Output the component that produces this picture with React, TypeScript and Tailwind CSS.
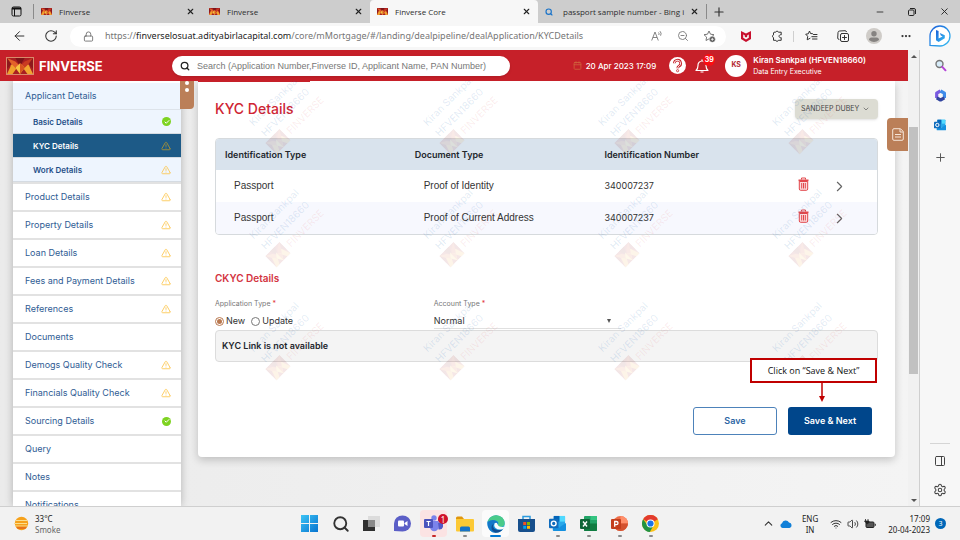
import React from "react";
import {
  ArrowLeft,
  Calendar,
  Check,
  ChevronDown,
  ChevronRight,
  ChevronUp,
  Ellipsis,
  Lock,
  Minus,
  PanelRight,
  Plus,
  RotateCw,
  Search,
  Settings,
  TriangleAlert,
  Volume2,
  Wifi,
  X,
  ZoomOut,
} from "lucide-react";

const UI = "font-['Open_Sans','Noto_Sans',sans-serif]";
const APP = "font-[Inter,Roboto,sans-serif]";

function BrandMark({ className }: { className: string }) {
  return (
    <svg viewBox="0 0 28 18" preserveAspectRatio="none" className={className} aria-hidden="true">
      <rect width="28" height="18" fill="#a81e22" />
      <path d="M0 0 9 4 14 9 5 12Z" fill="#e2622a" />
      <path d="M28 0 19 4 14 9 23 12Z" fill="#c93a22" />
      <path d="M0 18 5 7 10 12 6 18Z" fill="#f0a02c" />
      <path d="M28 18 23 7 18 12 22 18Z" fill="#f2a531" />
      <path d="M9 0h10l-5 9Z" fill="#7c1418" />
      <path d="m14 6 5 5-5 7-5-7Z" fill="#f6c443" />
      <path d="m14 6 5 5-5 7Z" fill="#d9541f" />
      <path d="M0 0 5 7 0 12ZM28 0l-5 7 5 5Z" fill="#8e181c" />
    </svg>
  );
}

function Tab({ title, active, search }: { title: string; active?: boolean; search?: boolean }) {
  return (
    <div
      className={`flex w-[168px] min-w-0 items-center border-l pl-[6px] pr-[7px] ${
        active ? "rounded-t border-[#f7f7f7] bg-[#f7f7f7]" : "border-[#cdcdcd]"
      }`}
    >
      {search ? (
        <Search size={8} color="#1b74c9" strokeWidth={3.5} className="mr-[3px] shrink-0" />
      ) : (
        <BrandMark className="h-[7px] w-[11px] shrink-0" />
      )}
      <span className="ml-[7px] min-w-0 flex-1 overflow-hidden whitespace-nowrap text-[8px] leading-3 text-[#2d2d2d]">
        {title}
      </span>
      <button aria-label={`Close ${title}`} className="ml-1">
        <X size={9} strokeWidth={3} color="#222" />
      </button>
    </div>
  );
}

function TabStrip() {
  return (
    <div className="flex h-[23px] shrink-0 bg-[#cdcdcd]">
      <button aria-label="Tab actions" className="flex w-[33px] items-center justify-center">
        <svg width="11" height="11" viewBox="0 0 11 11" fill="none" stroke="#111">
          <rect x="1" y="1" width="9" height="9" rx="1.5" />
          <path d="M1 2.5h9" strokeWidth="2" />
          <path d="M3.5 3v7" />
        </svg>
      </button>
      <span className="my-1 w-px bg-[#8a8a8a]" />
      <Tab title="Finverse" />
      <span className="my-1 -mr-px w-px bg-[#8a8a8a]" />
      <Tab title="Finverse" />
      <Tab title="Finverse Core" active />
      <Tab title="passport sample number - Bing i" search />
      <span className="my-1 -mr-px w-px bg-[#8a8a8a]" />
      <button aria-label="New tab" className="flex w-[26px] items-center justify-center">
        <Plus size={14} strokeWidth={2} color="#333" />
      </button>
      <div className="ml-auto flex">
        <button aria-label="Minimize" className="flex w-8 items-center justify-center">
          <Minus size={10} color="#222" />
        </button>
        <button aria-label="Restore" className="flex w-8 items-center justify-center">
          <svg width="8" height="8" viewBox="0 0 8 8" fill="none" stroke="#222">
            <rect x="0.5" y="2" width="5.5" height="5.5" rx="1" />
            <path d="M2 .5h4A1.5 1.5 0 0 1 7.500 2v4" />
          </svg>
        </button>
        <button aria-label="Close window" className="flex w-8 items-center justify-center">
          <X size={11} color="#222" />
        </button>
      </div>
    </div>
  );
}

function Toolbar() {
  return (
    <div className="flex h-[27px] shrink-0 items-center bg-[#f7f7f7] pb-px pl-3">
      <button aria-label="Back" className="flex w-[15px] justify-center">
        <ArrowLeft size={16} strokeWidth={1.600} color="#333" />
      </button>
      <button aria-label="Refresh" className="ml-4 flex w-[15px] justify-center">
        <RotateCw size={14} strokeWidth={1.800} color="#333" />
      </button>
      <div className="ml-3 flex h-[21px] min-w-0 flex-1 items-center rounded-full bg-white pl-[13px] pr-[10px]">
        <Lock size={11} strokeWidth={1.800} color="#666" />
        <div
          role="textbox"
          aria-label="Address"
          className="ml-[11px] min-w-0 flex-1 overflow-hidden whitespace-nowrap font-['Noto_Sans',sans-serif] text-[9px] leading-4 text-[#767676]"
        >
          https://<span className="text-[#1c1c1c]">finverselosuat.adityabirlacapital.com</span>
          /core/mMortgage/#/landing/dealpipeline/dealApplication/KYCDetails
        </div>
        <div className="flex items-center gap-[14px] text-[#777]">
          <button aria-label="Read aloud">
            <svg width="12" height="12" viewBox="0 0 12 12" fill="none" stroke="currentColor" strokeWidth=".9">
              <path d="M.7 10.500 4 2l3.300 8.500M1.900 7.500h4.200M7.500 2.500q1 1 .3 2.500M9 1.200q1.900 2 .6 4.500" />
            </svg>
          </button>
          <button aria-label="Zoom out">
            <ZoomOut size={12} strokeWidth={1.800} />
          </button>
          <button aria-label="Add to favourites">
            <svg width="13" height="13" viewBox="0 0 13 13" fill="none" stroke="currentColor">
              <path d="m6 1 1.500 3.200 3.500.5L8.500 7 6 8.900 3 10.500l.6-3.400L1 4.700l3.500-.5Z" strokeLinejoin="round" />
              <circle cx="9.300" cy="9.300" r="3" fill="#555" stroke="#fff" strokeWidth=".5" />
              <path d="M9.300 7.800v3M7.800 9.300h3" stroke="#fff" strokeWidth=".8" />
            </svg>
          </button>
        </div>
      </div>
      <div className="ml-[14px] flex items-center">
        <button aria-label="McAfee" className="flex w-[12px] justify-center">
          <svg width="10" height="11" viewBox="0 0 10 11">
            <path d="M0 0l5 2.500L10 0v8L5 11 0 8Z" fill="#c8102e" />
            <path d="M2.200 3.600 5 5l2.800-1.400v3.200L5 8.500 2.200 6.800Z" fill="#f7f7f7" />
            <path d="M3.800 3.200h2.400v2.500L5 6.400l-1.200-.7Z" fill="#c8102e" />
          </svg>
        </button>
        <button aria-label="Extensions" className="ml-[18px] flex w-[13px] justify-center">
          <svg width="12" height="12" viewBox="0 0 12 12" fill="none" stroke="#333" strokeLinejoin="round">
            <path d="M3 2.200h1.700a1.400 1.400 0 0 1 2.700 0h2.800v2.700a1.500 1.500 0 1 0 0 2.700v2.700H7.400a1.400 1.400 0 0 1-2.700 0H2.500V7.600a1.400 1.400 0 0 1 0-2.700V2.700Z" />
          </svg>
        </button>
        <span className="ml-[10px] h-[11px] w-px bg-[#cfcfcf]" />
        <button aria-label="Favourites" className="ml-[11px] flex w-[13px] justify-center">
          <svg width="13" height="12" viewBox="0 0 13 12" fill="none" stroke="#333" strokeLinejoin="round" strokeLinecap="round">
            <path d="M7.500 3.700 5.500 3.500 4.500 1 3.300 3.800.7 4.200 2.700 6.300 2.200 9.800 5 8.300M8.500 4.500H12M6.800 6.700H12M7.500 9H12" />
          </svg>
        </button>
        <button aria-label="Collections" className="ml-[18px] flex w-[13px] justify-center">
          <svg width="12" height="12" viewBox="0 0 12 12" fill="none" stroke="#333" strokeLinecap="round">
            <rect x="3.500" y="3.500" width="8" height="8" rx="1.500" />
            <path d="M2 9.500A1.500 1.500 0 0 1 .7 8L1 2.500A1.700 1.700 0 0 1 2.700 1L8 .7a1.500 1.500 0 0 1 1.500 1M7.500 5.500v4M5.500 7.500h4" />
          </svg>
        </button>
        <button aria-label="Profile" className="ml-[17px] flex">
          <svg width="16" height="16" viewBox="0 0 16 16">
            <circle cx="8" cy="8" r="8" fill="#cfccc8" />
            <circle cx="8" cy="5.800" r="2.700" fill="#868381" />
            <path d="M3 12q0-2.500 2.500-2.500h5Q13 9.500 13 12q-5 4-10 0Z" fill="#868381" />
          </svg>
        </button>
        <button aria-label="Settings and more" className="ml-[18px] mr-2 flex">
          <Ellipsis size={12} strokeWidth={2.500} color="#333" />
        </button>
      </div>
    </div>
  );
}

function OutlookIcon({ size }: { size: number }) {
  return (
    <svg width={size} height={size} viewBox="0 0 18 18">
      <rect x="5" y="1" width="12" height="12" rx="1" fill="#28a8ea" />
      <path d="M11 1h6v6h-6Z" fill="#50d9ff" />
      <path d="M5 1h6v6H5Z" fill="#0364b8" />
      <path d="M4 8.500 11 13l7-4.500V16a1 1 0 0 1-1 1H5a1 1 0 0 1-1-1Z" fill="#1490df" />
      <rect x="0" y="4" width="10" height="10" rx="1" fill="#0f6cbd" />
      <circle cx="5" cy="9" r="2.500" fill="none" stroke="#fff" strokeWidth="1.500" />
    </svg>
  );
}

function EdgeSidebar() {
  return (
    <aside className="flex w-10 shrink-0 flex-col items-center bg-[#f7f7f7] pb-[9px]">
      <button aria-label="Bing chat" className="mt-[2px]">
        <svg width="22" height="22" viewBox="0 0 22 22" className="block">
          <defs>
            <linearGradient id="bing" x1="0" y1="0" x2="1" y2="1">
              <stop offset="0" stopColor="#1b5fd9" />
              <stop offset="1" stopColor="#35bdf2" />
            </linearGradient>
          </defs>
          <path d="M1 20.500V11A10 10 0 1 1 11 21Z" fill="#fff" stroke="url(#bing)" strokeWidth="1.300" />
          <path d="m7 5 2.600 1v7.500l4-2-1.800-1-1-2.500 5 2.200v3L9.600 17 7 15.200Z" fill="url(#bing)" />
        </svg>
      </button>
      <button aria-label="Search" className="mt-3">
        <svg width="13" height="13" viewBox="0 0 13 13" fill="none" className="block">
          <circle cx="5.500" cy="5" r="3.500" fill="#d8edfa" stroke="#777" strokeWidth="1.400" />
          <path d="m8.300 7.800 3.200 3.500" stroke="#b445d8" strokeWidth="2" strokeLinecap="round" />
        </svg>
      </button>
      <button aria-label="Microsoft 365" className="mt-[17px]">
        <svg width="13" height="13" viewBox="0 0 13 13" fill="none" strokeWidth="3.200" strokeLinejoin="round" className="block">
          <path d="M2.700 9V4.200L6.500 2" stroke="#7a5be0" />
          <path d="m6.500 2 3.900 2.200V9" stroke="#3e8bea" />
          <path d="m10.400 8.800-3.900 2.200-3.800-2.200" stroke="#32459f" />
        </svg>
      </button>
      <button aria-label="Outlook" className="mt-[17px]">
        <OutlookIcon size={12} />
      </button>
      <button aria-label="Add" className="mt-[20px]">
        <Plus size={13} strokeWidth={1.800} color="#555" className="block" />
      </button>
      <span className="mt-auto h-px w-5 bg-[#d5d5d5]" />
      <button aria-label="Hide sidebar" className="mt-[11px]">
        <PanelRight size={12} strokeWidth={2} color="#444" />
      </button>
      <button aria-label="Settings" className="mt-4">
        <Settings size={14} strokeWidth={1.800} color="#444" />
      </button>
    </aside>
  );
}

function AppHeader() {
  return (
    <header className="flex h-[31px] shrink-0 items-center bg-[#c62029] pl-[6px] text-white">
      <BrandMark className="h-[18px] w-7 border border-[#d98a6a]" />
      <span className="ml-[5px] w-[133px] text-[13px] font-bold leading-4">FINVERSE</span>
      <label className="flex h-5 w-[338px] items-center rounded-full bg-white pl-2 shadow">
        <Search size={10} strokeWidth={3} color="#222" />
        <input
          type="search"
          aria-label="Search"
          placeholder="Search (Application Number,Finverse ID, Applicant Name, PAN Number)"
          className="ml-[7px] min-w-0 flex-1 bg-transparent font-['Liberation_Sans',Arial,sans-serif] text-[9px] leading-4 text-[#333] outline-none placeholder:text-[#777]"
        />
      </label>
      <div className="ml-auto flex items-center">
        <Calendar size={9} strokeWidth={2} color="#d0683f" />
        <span className="ml-1 whitespace-nowrap text-[8px] font-medium leading-3">20 Apr 2023 17:09</span>
      </div>
      <button aria-label="Help" className="ml-[13px] flex">
        <svg width="17" height="17" viewBox="0 0 17 17" fill="none">
          <circle cx="8.500" cy="8.500" r="8.500" fill="#fff" />
          <path d="M5.300 6.300a3.200 3.200 0 1 1 4.700 2.900q-1.300.6-1.300 2" stroke="#c62029" strokeWidth="2.600" />
          <path d="M5.300 6.300a3.200 3.200 0 1 1 4.700 2.900q-1.300.6-1.300 2" stroke="#fff" strokeWidth=".9" />
          <circle cx="8.600" cy="13.700" r="1.100" stroke="#c62029" strokeWidth=".8" />
        </svg>
      </button>
      <button aria-label="Notifications, 39 new" className="relative ml-[9px] flex">
        <svg width="14" height="16" viewBox="0 0 14 16" fill="none" stroke="#fff" strokeWidth="1.200">
          <path d="M1 12.500q2-1.500 2-5A4 4 0 0 1 7 3a4 4 0 0 1 4 4.500q0 3.500 2 5ZM5.500 14h3M7 3V1.500" strokeLinejoin="round" />
        </svg>
        <span className="absolute -right-[6px] -top-1 flex h-3 w-3 items-center justify-center rounded-full bg-[#fb0d12] text-[7px] font-bold leading-3">
          39
        </span>
      </button>
      <span className="ml-4 flex h-[22px] w-[22px] items-center justify-center rounded-full bg-white text-[7px] font-bold text-[#b32a31]">
        KS
      </span>
      <div className="ml-[6px] mr-[42px] whitespace-nowrap">
        <p className="text-[8px] font-semibold leading-3">Kiran Sankpal (HFVEN18660)</p>
        <p className="text-[7px] leading-3">Data Entry Executive</p>
      </div>
    </header>
  );
}

type Status = "done" | "warn" | "none";

const applicant: { label: string; status: Status; active?: boolean }[] = [
  { label: "Basic Details", status: "done" },
  { label: "KYC Details", status: "warn", active: true },
  { label: "Work Details", status: "warn" },
];

const sections: { label: string; status: Status }[] = [
  { label: "Product Details", status: "warn" },
  { label: "Property Details", status: "warn" },
  { label: "Loan Details", status: "warn" },
  { label: "Fees and Payment Details", status: "warn" },
  { label: "References", status: "warn" },
  { label: "Documents", status: "none" },
  { label: "Demogs Quality Check", status: "warn" },
  { label: "Financials Quality Check", status: "warn" },
  { label: "Sourcing Details", status: "done" },
  { label: "Query", status: "none" },
  { label: "Notes", status: "none" },
  { label: "Notifications", status: "none" },
];

function StatusIcon({ status, dim }: { status: Status; dim?: boolean }) {
  if (status === "done")
    return (
      <span className="flex h-[9px] w-[9px] items-center justify-center rounded-full bg-[#7ed321]">
        <Check size={6} strokeWidth={4} color="#fff" />
      </span>
    );
  if (status === "warn") return <TriangleAlert size={10} strokeWidth={2} color={dim ? "#b3962f" : "#fdc54b"} />;
  return null;
}

function SideNav() {
  return (
    <nav className="w-[168px] shrink-0 overflow-hidden bg-white text-[9px] leading-3 text-[#2f5c94] shadow-[0_0_8px_rgba(0,0,0,0.25)]">
      <a href="#applicant" className="mt-[2px] flex h-[27px] items-center border-b border-[#dde3ea] bg-[#eef5fe] px-3">
        Applicant Details
      </a>
      {applicant.map((i) => (
        <a
          key={i.label}
          href="#applicant"
          className={`flex h-6 items-center justify-between border-b border-[#d5dbe2] pl-5 pr-[10px] text-[8px] font-semibold ${
            i.active ? "bg-[#1d5a87] text-white" : "bg-[#eef5fe] text-[#1f4f88]"
          }`}
        >
          {i.label}
          <StatusIcon status={i.status} dim={i.active} />
        </a>
      ))}
      <div className="border-t-2 border-[#e2e2e2]">
        {sections.map((i) => (
          <a
            key={i.label}
            href="#section"
            className="flex h-7 items-center justify-between border-b-2 border-[#e2e2e2] pl-3 pr-[10px]"
          >
            {i.label}
            <StatusIcon status={i.status} />
          </a>
        ))}
      </div>
    </nav>
  );
}

function Watermarks() {
  return (
    <div className="pointer-events-none absolute inset-0 overflow-hidden" aria-hidden="true">
      <div className="-mt-[26px] grid auto-rows-[113px] grid-cols-4">
        {Array.from({ length: 12 }, (_, i) => (
          <div key={i} className="flex items-center justify-center">
            <div className="-rotate-45 whitespace-nowrap text-center text-[10px] leading-4 text-[#2f6fb5]/15">
              <p>Kiran Sankpal</p>
              <p>HFVEN18660</p>
              <p className="flex items-center justify-center gap-1 text-[#dd3c3c]/10">
                <BrandMark className="h-4 w-5 opacity-10" />
                FINVERSE
              </p>
            </div>
          </div>
        ))}
      </div>
    </div>
  );
}

function TrashIcon() {
  return (
    <svg width="11" height="14" viewBox="0 0 11 14" fill="none" stroke="#e2474b">
      <path d="M1.300 4.500h8.400v7.500a1.300 1.300 0 0 1-1.300 1.300H2.600A1.300 1.300 0 0 1 1.300 12Z" fill="#fbdcdc" />
      <path d="M.5 3.300h10" strokeWidth="1.800" />
      <path d="M3.500 2.500V1h4v1.500" />
      <path d="M3.700 6v5.500M5.500 6v5.500M7.300 6v5.500" />
    </svg>
  );
}

const rows = [
  { type: "Passport", doc: "Proof of Identity", num: "340007237" },
  { type: "Passport", doc: "Proof of Current Address", num: "340007237" },
];

function KycTable() {
  return (
    <div className="mt-[19px] overflow-hidden rounded border border-[#d6dadd]">
      <table className="w-full table-fixed text-left">
        <colgroup>
          <col className="w-[28.700%]" />
          <col className="w-[28.700%]" />
          <col />
          <col className="w-9" />
          <col className="w-14" />
        </colgroup>
        <thead>
          <tr className="h-[31px] bg-[#d9e3ed] text-[9px] leading-3 text-[#23272c]">
            <th className="pl-[9px] font-semibold">Identification Type</th>
            <th className="pl-[9px] font-semibold">Document Type</th>
            <th className="pl-[9px] font-semibold">Identification Number</th>
            <th aria-label="Delete" />
            <th aria-label="Open" />
          </tr>
        </thead>
        <tbody>
          {rows.map((r, i) => (
            <tr
              key={i}
              className="h-8 font-['Liberation_Sans',Arial,sans-serif] text-[10px] leading-3 text-[#333] even:bg-[#f7f8fe]"
            >
              <td className="pl-[18px]">{r.type}</td>
              <td className="pl-[18px]">{r.doc}</td>
              <td className="pl-[9px] font-[Inter,Roboto,sans-serif] text-[9px]">{r.num}</td>
              <td className="pb-1">
                <button aria-label="Delete row" className="mx-auto flex">
                  <TrashIcon />
                </button>
              </td>
              <td>
                <button aria-label="Open row" className="ml-[10px] flex">
                  <ChevronRight size={17} strokeWidth={1.600} color="#666" />
                </button>
              </td>
            </tr>
          ))}
        </tbody>
      </table>
    </div>
  );
}

const radio =
  "h-[9px] w-[9px] appearance-none rounded-full border border-[#777] bg-clip-content p-[1px] checked:border-[#b9784f] checked:bg-[#b9784f]";

function KycCard() {
  return (
    <main className="relative min-w-0 flex-1 self-start rounded-b bg-white px-[17px] pb-[22px] pt-[18px] shadow-[0_3px_9px_rgba(0,0,0,0.2)]">
      <span className="absolute left-0 top-0 h-px w-28 bg-[#c62029]" />
      <div className="flex h-5 items-center justify-between">
        <h1 className="text-[14px] font-medium leading-5 text-[#cf2533]">KYC Details</h1>
        <div className="relative">
          <select
            aria-label="Applicant"
            className="block h-5 w-[83px] appearance-none rounded-sm bg-[#dcdcd3] pl-[6px] text-[7px] leading-3 text-[#444] shadow-sm"
          >
            <option>SANDEEP DUBEY</option>
          </select>
          <ChevronDown size={8} color="#555" className="pointer-events-none absolute right-2 top-[6px]" />
        </div>
      </div>
      <KycTable />
      <h2 className="mt-[35px] text-[10px] font-semibold leading-4 text-[#d3343f]">CKYC Details</h2>
      <div className="mt-3 grid grid-cols-[33%_1fr] text-[9px] text-[#333]">
        <fieldset>
          <legend className="text-[7px] leading-3 text-[#777]">
            Application Type <span className="text-[#e23b3b]">*</span>
          </legend>
          <div className="mt-[3px] flex h-4 items-center">
            <input type="radio" id="new" name="apptype" defaultChecked className={radio} />
            <label htmlFor="new" className="ml-[2px] leading-4">
              New
            </label>
            <input type="radio" id="update" name="apptype" className={`${radio} ml-[6px]`} />
            <label htmlFor="update" className="ml-[2px] leading-4">
              Update
            </label>
          </div>
        </fieldset>
        <div className="relative w-[187px]">
          <label htmlFor="acct" className="block text-[7px] leading-3 text-[#777]">
            Account Type <span className="text-[#e23b3b]">*</span>
          </label>
          <select
            id="acct"
            className="mt-[3px] block h-4 w-full appearance-none border-b border-[#e0e0e0] bg-transparent leading-4"
          >
            <option>Normal</option>
          </select>
          <span className="pointer-events-none absolute right-[10px] top-[21px] border-x-2 border-t-4 border-x-transparent border-t-[#555]" />
        </div>
      </div>
      <div className="mt-px flex h-8 items-center rounded-sm border border-[#dcdcdc] bg-[#f4f4f4] pl-[6px] text-[9px] font-semibold leading-3 text-[#23272c]">
        KYC Link is not available
      </div>
      <Watermarks />
      <div className="relative mt-[45px] flex justify-end gap-[11px] pr-[6px] text-[9px] font-semibold leading-3">
        <div className="absolute right-px bottom-8 flex w-[127px] flex-col items-center font-['Open_Sans','Noto_Sans',sans-serif] font-normal">
          <p className="w-full border-2 border-[#c00000] bg-white py-[3px] text-center text-[9px] leading-[15px] text-[#111]">
            Click on “Save &amp; Next”
          </p>
          <svg width="8" height="20" viewBox="0 0 8 20" className="ml-4" aria-hidden="true">
            <path d="M4 0v14" stroke="#c00000" strokeWidth="1.500" />
            <path d="M1 13h6l-3 6Z" fill="#c00000" />
          </svg>
        </div>
        <button className="h-7 w-[84px] rounded-[3px] border border-[#4d82ba] bg-white text-[#2b65a3]">Save</button>
        <button className="h-7 w-[84px] rounded-[3px] bg-[#00468b] text-white">Save &amp; Next</button>
      </div>
    </main>
  );
}

function Tile({
  children,
  name,
  mark,
  box,
}: {
  children: React.ReactNode;
  name: string;
  mark?: "gray" | "red" | "blue";
  box?: "white" | "pink";
}) {
  return (
    <button
      aria-label={name}
      className={`relative flex h-[27px] w-[27px] items-center justify-center rounded ${
        box === "white" ? "bg-[#fbfbfb]" : box === "pink" ? "bg-[#fbe3e3]" : ""
      }`}
    >
      {children}
      {mark && (
        <span
          className={`absolute bottom-0 h-[2px] rounded-full ${
            mark === "blue" ? "w-[11px] bg-[#0078d4]" : mark === "red" ? "w-1 bg-[#c62828]" : "w-1 bg-[#8a8a8a]"
          }`}
        />
      )}
    </button>
  );
}

function Taskbar() {
  return (
    <footer className="relative flex h-[34px] shrink-0 items-center border-t border-[#cfcfcf] bg-[#f2f2f2] font-['Noto_Sans',sans-serif] text-[8px] leading-[11px] text-[#222]">
      <div className="flex items-center pl-[14px]">
        <svg width="15" height="15" viewBox="0 0 15 15">
          <circle cx="7.500" cy="7.500" r="6.700" fill="#f6a21c" />
          <path d="M2 4.500h11M0 7.500h13M1 10h13" stroke="#fbdf8f" strokeWidth="1" />
          <path d="M2 10.700h11l-2 2.300H4Z" fill="#e8731a" />
        </svg>
        <div className="ml-[6px]">
          <p>33°C</p>
          <p className="text-[#666]">Smoke</p>
        </div>
      </div>
      <div className="absolute left-1/2 flex -translate-x-1/2 gap-1">
        <Tile name="Start">
          <svg width="17" height="17" viewBox="0 0 17 17">
            <defs>
              <linearGradient id="win" x1="0" y1="0" x2="1" y2="1">
                <stop offset="0" stopColor="#3cc4f5" />
                <stop offset="1" stopColor="#0873cf" />
              </linearGradient>
            </defs>
            <path d="M0 0h8v8H0ZM9 0h8v8H9ZM0 9h8v8H0ZM9 9h8v8H9Z" fill="url(#win)" />
          </svg>
        </Tile>
        <Tile name="Search">
          <Search size={18} strokeWidth={2.500} color="#333" />
        </Tile>
        <Tile name="Task view">
          <svg width="17" height="17" viewBox="0 0 17 17">
            <rect x="5" y="1" width="12" height="11" fill="#dcdcdc" />
            <rect x="0" y="5" width="12" height="11" fill="#2f2f2f" />
            <path d="M5 5h7v7H5Z" fill="#8a8a8a" />
          </svg>
        </Tile>
        <Tile name="Chat">
          <svg width="17" height="17" viewBox="0 0 17 17">
            <path d="M0 16V8.500a8.500 8 0 1 1 8.500 8Z" fill="#5b5fc7" />
            <rect x="4" y="5.500" width="6" height="6" rx="1" fill="#fff" />
            <path d="m10.500 8 3-2v5l-3-2Z" fill="#fff" />
          </svg>
        </Tile>
        <Tile name="Teams" mark="red" box="pink">
          <svg width="19" height="17" viewBox="0 0 19 17">
            <circle cx="10" cy="3" r="2.700" fill="#7b83eb" />
            <circle cx="16" cy="5" r="2" fill="#5059c9" />
            <path d="M6 6h8.500v6a4.200 4.200 0 0 1-8.500 0Z" fill="#7b83eb" />
            <path d="M14 7.500h5V12q-1 3-4.500 2.500Z" fill="#5059c9" />
            <rect x="0" y="4" width="9" height="9" rx="1" fill="#4b53bc" />
            <path d="M2.500 6.500h4M4.500 6.500V11" stroke="#fff" strokeWidth="1.200" />
          </svg>
          <span className="absolute -right-px top-1 flex h-[10px] w-[10px] items-center justify-center rounded-full bg-[#d0112b] text-[8px] text-white">
            1
          </span>
        </Tile>
        <Tile name="File Explorer" mark="gray">
          <svg width="18" height="16" viewBox="0 0 18 16">
            <path d="M0 2q0-1.500 1.500-1.500H6L8 3H0Z" fill="#e0960d" />
            <path d="M0 3h17q1 0 1 1v10.500q0 1-1 1H1q-1 0-1-1Z" fill="#fcc935" />
            <path d="M4 15.500V12q0-1.500 1.500-1.500h7Q14 10.500 14 12v3.500Z" fill="#1673c7" />
          </svg>
        </Tile>
        <Tile name="Edge" mark="blue" box="white">
          <svg width="18" height="18" viewBox="0 0 18 18">
            <circle cx="9" cy="9" r="8.700" fill="#1b9de2" />
            <path d="M.5 7Q3 0 9.500.3 17 1 17.700 8q0 4-4.700 4-3 0-2-2 1.500-4-3-4.500Q3 5 .5 7Z" fill="#4acb8a" />
            <path d="M.5 7Q5 3.500 9.500 6q2.500 2 1 4.500-3-4-6 .5Q4 15 8 17.700 0 16.500.5 7Z" fill="#1477c8" />
            <path d="M7 8.500q-2.500 4 2 6 4 1.500 7-.8-2.500 4.300-8 4Q3.500 15 4.500 11q.8-2 2.500-2.500Z" fill="#104f95" />
            <path d="M7.500 8.500q2-1.500 3 .5.500 3 5 3 1.500 0 2-.8-.5 2-1.500 2.700-4.500 1.500-7.500-1-2-2-1-4.400Z" fill="#fbfbfb" />
          </svg>
        </Tile>
        <Tile name="Microsoft Store">
          <svg width="17" height="17" viewBox="0 0 17 17">
            <path d="M5 4V1.500h7V4" fill="none" stroke="#2b9be0" strokeWidth="1.500" />
            <path d="M0 4h17v11q0 2-2 2H2q-2 0-2-2Z" fill="#174f8c" />
            <path d="M5.200 7h3v3h-3Z" fill="#f25022" />
            <path d="M9 7h3v3H9Z" fill="#7fba00" />
            <path d="M5.200 10.800h3v3h-3Z" fill="#00a4ef" />
            <path d="M9 10.800h3v3H9Z" fill="#ffb900" />
          </svg>
        </Tile>
        <Tile name="Outlook" mark="gray">
          <OutlookIcon size={17} />
        </Tile>
        <Tile name="Excel" mark="gray">
          <svg width="17" height="17" viewBox="0 0 17 17">
            <rect x="4" y="1" width="13" height="15" rx="1" fill="#21a366" />
            <path d="M4 8.500h13V15q0 1-1 1H5q-1 0-1-1Z" fill="#107c41" />
            <path d="M10.500 1H16q1 0 1 1v3h-6.500Z" fill="#33c481" />
            <rect x="0" y="4" width="10" height="10" rx="1" fill="#0e6537" />
            <path d="m3 6.500 4 5M7 6.500l-4 5" stroke="#fff" strokeWidth="1.400" />
          </svg>
        </Tile>
        <Tile name="PowerPoint" mark="gray">
          <svg width="17" height="17" viewBox="0 0 17 17">
            <circle cx="9.500" cy="8.500" r="7.500" fill="#ed6c47" />
            <path d="M9.500 1A7.500 7.500 0 0 1 17 8.500H9.500Z" fill="#ff8f6b" />
            <path d="M2 8.500h15a7.500 7.500 0 0 1-15 0Z" fill="#d35230" />
            <rect x="0" y="4" width="10" height="10" rx="1" fill="#c43e1c" />
            <path d="M3.700 11.800V6.500h1.700a1.500 1.500 0 0 1 0 3.200H3.700" fill="none" stroke="#fff" strokeWidth="1.300" />
          </svg>
        </Tile>
        <Tile name="Chrome" mark="gray">
          <svg width="17" height="17" viewBox="0 0 17 17">
            <circle cx="8.500" cy="8.500" r="8.500" fill="#fbc116" />
            <path d="M8.500 8.500 1.100 4.300a8.500 8.500 0 0 1 14.800 0Z" fill="#e33b2e" />
            <path d="M1.100 4.300a8.500 8.500 0 0 0 6.700 12.700L11.500 10.500 8.500 8.500 5 9.500Z" fill="#229342" />
            <circle cx="8.500" cy="8.500" r="4" fill="#fff" />
            <circle cx="8.500" cy="8.500" r="3.100" fill="#1a73e8" />
          </svg>
        </Tile>
      </div>
      <div className="ml-auto flex items-center pr-[14px]">
        <ChevronUp size={13} strokeWidth={2} color="#333" />
        <svg width="12" height="8" viewBox="0 0 12 8" className="ml-[5px]">
          <path d="M2.500 8A2.500 2.500 0 0 1 2 3.200 3.800 3.800 0 0 1 9 2.500 2.800 2.800 0 0 1 9.500 8Z" fill="#1180d8" />
        </svg>
        <div className="ml-[10px] text-center">
          <p>ENG</p>
          <p>IN</p>
        </div>
        <Wifi size={12} strokeWidth={2} color="#333" className="ml-3" />
        <Volume2 size={12} strokeWidth={1.800} color="#333" className="ml-[5px]" />
        <svg width="12" height="10" viewBox="0 0 12 10" className="ml-[5px]">
          <rect x="2" y="3" width="8" height="5.500" rx="1" fill="#555" stroke="#222" />
          <path d="M11.300 4.800v2" stroke="#222" />
          <path d="M1.500 0v2M4 0v2M.5 2h4.500v1.500L3 5Z" fill="#222" stroke="#222" strokeWidth=".8" />
        </svg>
        <div className="ml-3 text-right">
          <p>17:09</p>
          <p>20-04-2023</p>
        </div>
        <span className="ml-[5px] flex h-[11px] w-[11px] items-center justify-center rounded-full bg-[#0067b8] text-[7px] text-white">
          3
        </span>
      </div>
    </footer>
  );
}

export default function App() {
  return (
    <div className={`flex h-screen flex-col overflow-hidden bg-[#f7f7f7] ${UI}`}>
      <TabStrip />
      <div className="flex min-h-0 flex-1">
        <div className="flex min-w-0 flex-1 flex-col">
          <Toolbar />
          <div className="flex min-h-0 flex-1">
            <div className={`relative flex min-w-0 flex-1 flex-col bg-[#f1f1f1] ${APP}`}>
              <AppHeader />
              <div className="relative flex min-h-0 flex-1 gap-[17px] overflow-hidden bg-gradient-to-r from-[#ebebeb] to-[#f4f4f4] pl-[13px] pr-[13px]">
                <SideNav />
                <KycCard />
                <button
                  aria-label="Toggle menu"
                  className="absolute left-[180px] top-0 flex h-7 w-[14px] flex-col items-center gap-[3px] rounded-br bg-[#bb7f58]"
                >
                  <span className="h-1 w-1 rounded-full bg-white" />
                  <span className="h-1 w-1 rounded-full bg-white" />
                </button>
                <button
                  aria-label="Notes panel"
                  className="absolute right-0 top-[37px] flex h-[33px] w-[21px] items-center justify-center rounded-l bg-[#bb7f58]"
                >
                  <svg width="12" height="13" viewBox="0 0 12 13" fill="none" stroke="#f6e6da">
                    <path d="M2 .7h6.500L11.300 3.500V11q0 1.300-1.300 1.300H2Q.7 12.300.7 11V2Q.7.7 2 .7Z" />
                    <path d="M8 1v3h3M3 6.500h6M3 9h6" />
                  </svg>
                </button>
              </div>
            </div>
            <div
              className="flex w-3 shrink-0 flex-col items-center border-r border-[#cfcfcf] bg-[#f1f1f1] pb-1 pt-[5px]"
              aria-hidden="true"
            >
              <span className="border-x-[3px] border-b-[3px] border-x-transparent border-b-[#555]" />
              <div className="flex w-full min-h-0 flex-1 flex-col items-end py-1 pr-px">
                <span className="basis-[15%]" />
                <span className="w-[9px] basis-[57%] bg-[#c1c1c1]" />
              </div>
              <span className="border-x-[3px] border-t-[3px] border-x-transparent border-t-[#555]" />
            </div>
          </div>
        </div>
        <EdgeSidebar />
      </div>
      <Taskbar />
    </div>
  );
}
